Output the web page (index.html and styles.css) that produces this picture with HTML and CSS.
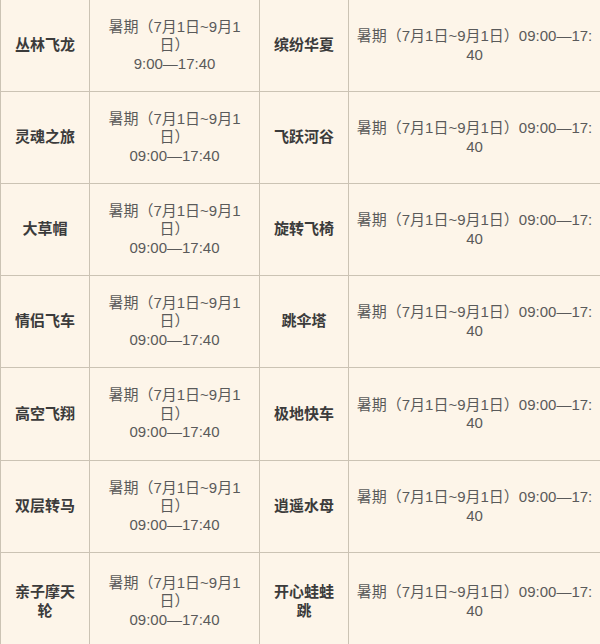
FILE: index.html
```html
<!DOCTYPE html>
<html lang="zh-CN">
<head>
<meta charset="utf-8">
<title>项目开放时间</title>
<link rel="stylesheet" href="styles.css">
</head>
<body>
<div class="table">
  <div class="row">
    <div class="cell name">丛林飞龙</div>
    <div class="cell time">暑期（7月1日~9月1日）<br>9:00—17:40</div>
    <div class="cell name">缤纷华夏</div>
    <div class="cell wide">暑期（7月1日~9月1日）09:00—17:40</div>
  </div>
  <div class="row">
    <div class="cell name">灵魂之旅</div>
    <div class="cell time">暑期（7月1日~9月1日）<br>09:00—17:40</div>
    <div class="cell name">飞跃河谷</div>
    <div class="cell wide">暑期（7月1日~9月1日）09:00—17:40</div>
  </div>
  <div class="row">
    <div class="cell name">大草帽</div>
    <div class="cell time">暑期（7月1日~9月1日）<br>09:00—17:40</div>
    <div class="cell name">旋转飞椅</div>
    <div class="cell wide">暑期（7月1日~9月1日）09:00—17:40</div>
  </div>
  <div class="row">
    <div class="cell name">情侣飞车</div>
    <div class="cell time">暑期（7月1日~9月1日）<br>09:00—17:40</div>
    <div class="cell name">跳伞塔</div>
    <div class="cell wide">暑期（7月1日~9月1日）09:00—17:40</div>
  </div>
  <div class="row row-tall">
    <div class="cell name">高空飞翔</div>
    <div class="cell time">暑期（7月1日~9月1日）<br>09:00—17:40</div>
    <div class="cell name">极地快车</div>
    <div class="cell wide">暑期（7月1日~9月1日）09:00—17:40</div>
  </div>
  <div class="row">
    <div class="cell name">双层转马</div>
    <div class="cell time">暑期（7月1日~9月1日）<br>09:00—17:40</div>
    <div class="cell name">逍遥水母</div>
    <div class="cell wide">暑期（7月1日~9月1日）09:00—17:40</div>
  </div>
  <div class="row row-last">
    <div class="cell name">亲子摩天轮</div>
    <div class="cell time">暑期（7月1日~9月1日）<br>09:00—17:40</div>
    <div class="cell name">开心蛙蛙跳</div>
    <div class="cell wide">暑期（7月1日~9月1日）09:00—17:40</div>
  </div>
</div>
</body>
</html>
```

FILE: styles.css
```css
html, body {
  margin: 0;
  padding: 0;
  background: #fdf5e9;
}
body {
  width: 600px;
  height: 644px;
  overflow: hidden;
  font-family: "Liberation Sans", "Noto Sans CJK SC", sans-serif;
}
.table {
  display: flex;
  flex-direction: column;
}
.row {
  display: grid;
  grid-template-columns: 90px 170px 89px 251px;
  height: 92px;
}
.row-tall {
  height: 93px;
}
.row-last {
  height: 98px;
}
.cell {
  box-sizing: border-box;
  display: flex;
  align-items: center;
  justify-content: center;
  text-align: center;
  border-right: 1px solid #cbc3b4;
  border-bottom: 1px solid #cbc3b4;
  font-size: 15px;
  line-height: 18.5px;
}
.cell:first-child {
  border-left: 1px solid #cbc3b4;
}
.cell:last-child {
  border-right: none;
}
.name {
  padding: 0 10px;
  color: #3b3b3b;
  font-weight: bold;
}
.time {
  padding: 0 15px;
  color: #5a5a5a;
}
.wide {
  padding: 0 6px;
  color: #5a5a5a;
  word-break: break-all;
}
```
